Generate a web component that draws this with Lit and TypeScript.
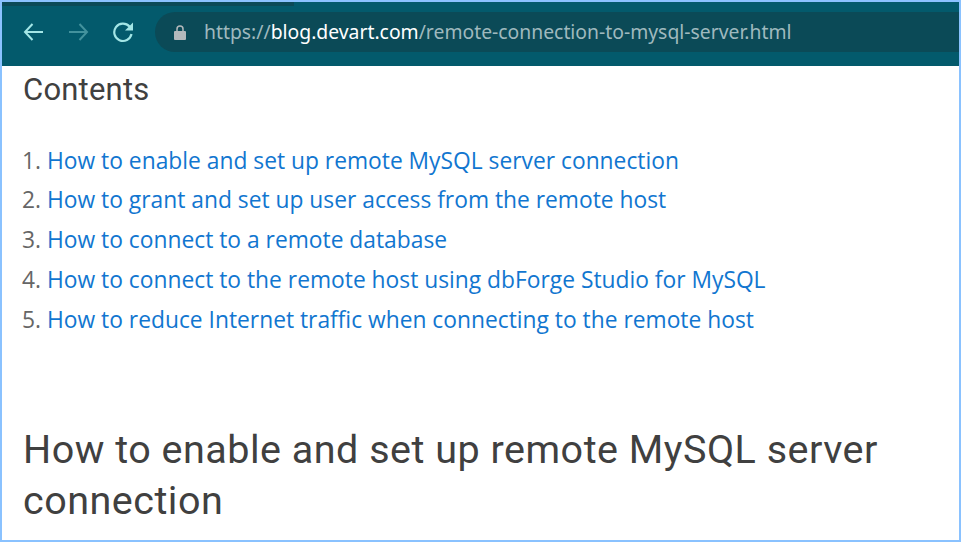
import { LitElement, html, css } from "lit";
import { customElement } from "lit/decorators.js";

const links = [
  "How to enable and set up remote MySQL server connection",
  "How to grant and set up user access from the remote host",
  "How to connect to a remote database",
  "How to connect to the remote host using dbForge Studio for MySQL",
  "How to reduce Internet traffic when connecting to the remote host",
];

@customElement("app-root")
export class AppRoot extends LitElement {
  static styles = css`
    :host {
      display: block;
      width: 961px;
      height: 542px;
      box-sizing: border-box;
      border: 2px solid #8ac2ff;
      background: #fff;
      overflow: hidden;
      font-family: "Open Sans", sans-serif;
    }
    .toolbar {
      display: flex;
      flex-direction: column;
      height: 64px;
      background: #035a6c;
    }
    .tabstrip {
      height: 4px;
      width: 292px;
      background: #0b4a57;
    }
    .tabstrip-wrap {
      height: 10px;
    }
    .nav {
      display: flex;
      align-items: center;
      padding-left: 20px;
      height: 40px;
    }
    .icon {
      width: 22px;
      height: 22px;
      margin-right: 23px;
      flex: none;
    }
    .icon.forward {
      opacity: 0.4;
    }
    .address {
      flex: 1;
      height: 40px;
      margin-left: -2px;
      border-radius: 20px 0 0 20px;
      background: #0b4a57;
      display: flex;
      align-items: center;
      padding-left: 19px;
      font-family: "Noto Sans", sans-serif;
      font-size: 19.35px;
      color: #9fb9be;
    }
    .lock {
      width: 12px;
      height: 15px;
      margin-right: 18px;
    }
    .url {
      margin-bottom: 2px;
    }
    .host {
      color: #fff;
    }
    .content {
      padding: 0 21px;
      color: #404040;
    }
    .contents-title {
      margin: 6px 0 0;
      font-family: Roboto, sans-serif;
      font-size: 31px;
      line-height: 36px;
      font-weight: 400;
      letter-spacing: 0.2px;
    }
    ol {
      margin: 32.7px 0 0;
      padding: 0 0 0 24px;
      font-size: 22.8px;
      line-height: 39.7px;
      color: #666;
    }
    a {
      color: #1176d0;
      text-decoration: none;
    }
    h2 {
      margin: 85px 0 0;
      font-family: Roboto, sans-serif;
      font-size: 39.5px;
      line-height: 51px;
      font-weight: 400;
      letter-spacing: 0.5px;
    }
  `;

  render() {
    return html`
      <div class="toolbar">
        <div class="tabstrip-wrap"><div class="tabstrip"></div></div>
        <div class="nav">
          <svg class="icon" viewBox="0 0 22 22" fill="none" stroke="#a3e6e6" stroke-width="2">
            <path d="M21 11H3M10.500 3L3 11l7.500 8" />
          </svg>
          <svg class="icon forward" viewBox="0 0 22 22" fill="none" stroke="#a3e6e6" stroke-width="2">
            <path d="M2 11h18M12.500 3L20 11l-7.500 8" />
          </svg>
          <svg class="icon" viewBox="0 0 22 22" fill="none" stroke="#a3e6e6" stroke-width="2.200">
            <path d="M19.500 13a8.700 8.700 0 1 1-2-7.500L20 8" />
            <path d="M21 1.500v8h-8z" fill="#a3e6e6" stroke="none" />
          </svg>
          <div class="address">
            <svg class="lock" viewBox="0 0 12 15">
              <path d="M1 6h10a1 1 0 0 1 1 1v7a1 1 0 0 1-1 1H1a1 1 0 0 1-1-1V7a1 1 0 0 1 1-1z" fill="#b4b9bc" />
              <path d="M3 6.500V4a3 3 0 0 1 6 0v2.500" fill="none" stroke="#b4b9bc" stroke-width="1.500" />
            </svg>
            <span class="url">https://<span class="host">blog.devart.com</span>/remote-connection-to-mysql-server.html</span>
          </div>
        </div>
      </div>
      <div class="content">
        <h3 class="contents-title">Contents</h3>
        <ol>
          ${links.map((l) => html`<li><a href="#">${l}</a></li>`)}
        </ol>
        <h2>How to enable and set up remote MySQL server connection</h2>
      </div>
    `;
  }
}
